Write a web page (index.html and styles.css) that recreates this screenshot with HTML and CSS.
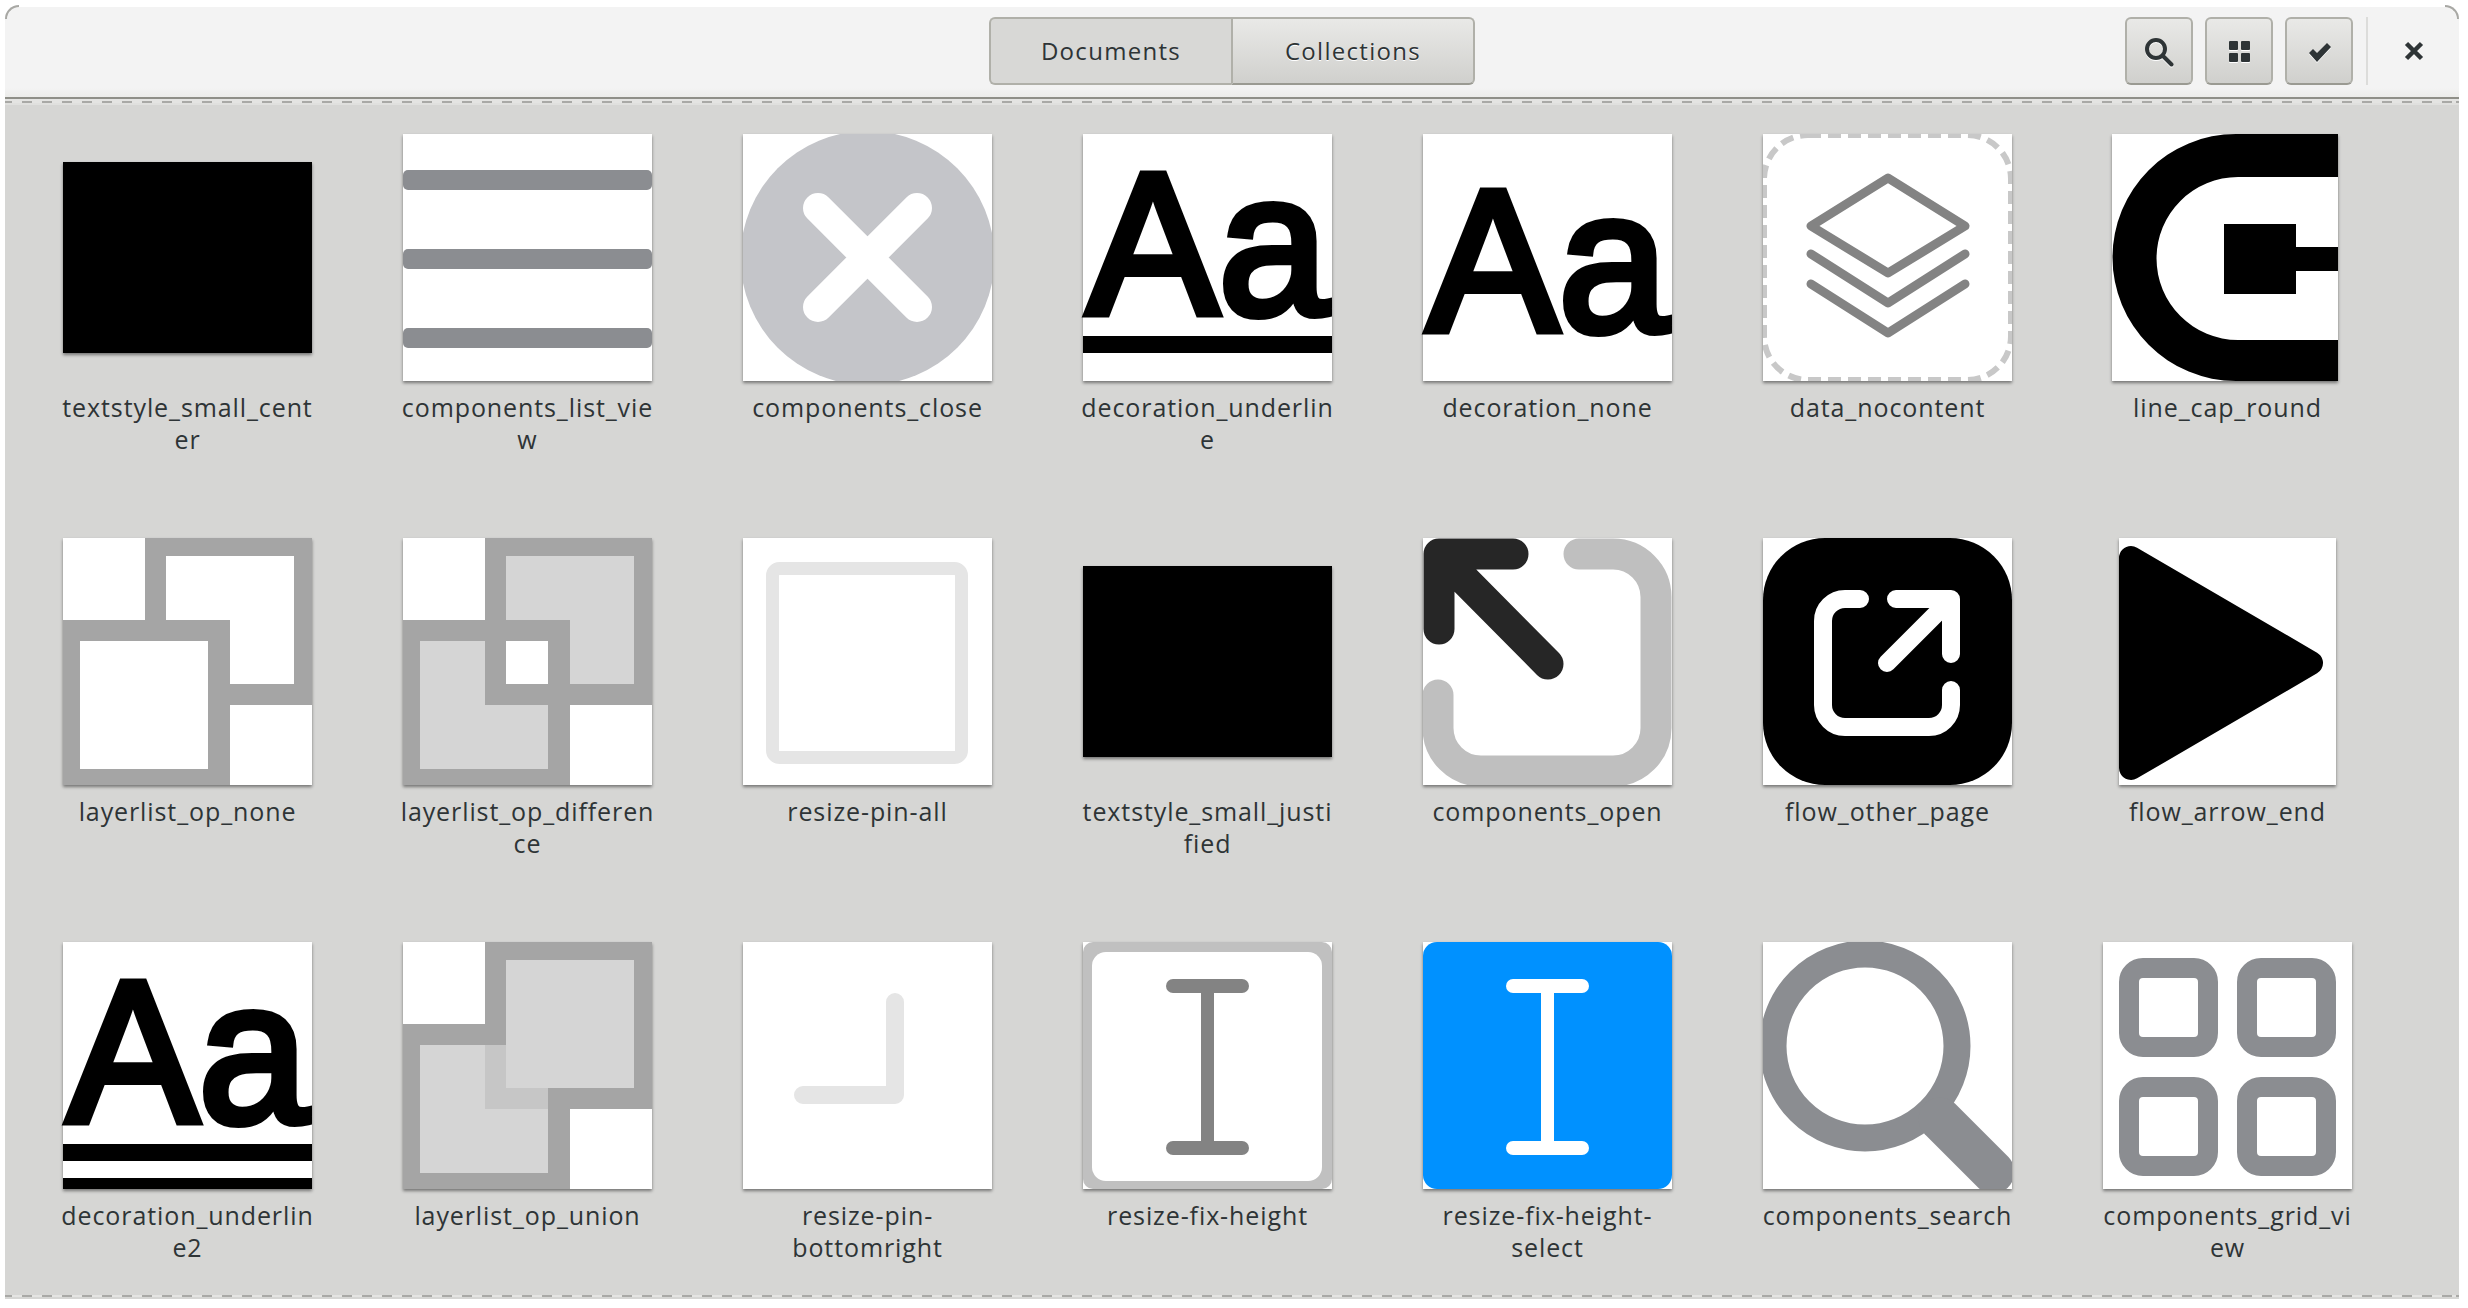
FILE: index.html
```html
<!DOCTYPE html>
<html lang="en">
<head>
    <meta charset="UTF-8">
    <title>Documents</title>
    <link rel="stylesheet" href="styles.css">
</head>
<body>
    <div class="window">
        <header class="titlebar">
            <div></div>
            <div class="switcher">
                <button class="seg active">Documents</button>
                <button class="seg">Collections</button>
            </div>
            <div class="actions">
                <button class="tool">
                    <svg width="32" height="32" viewBox="0 0 32 32" fill="none" stroke="#2e3436" stroke-width="4">
                        <circle cx="13" cy="14" r="9"/>
                        <path d="M20 21L28.500 29.500" stroke-linecap="round"/>
                    </svg>
                </button>
                <button class="tool">
                    <svg width="32" height="32" viewBox="0 0 32 32" fill="#2e3436">
                        <rect x="6" y="6" width="9" height="9" rx="1"/>
                        <rect x="18" y="6" width="9" height="9" rx="1"/>
                        <rect x="6" y="18" width="9" height="9" rx="1"/>
                        <rect x="18" y="18" width="9" height="9" rx="1"/>
                    </svg>
                </button>
                <button class="tool">
                    <svg width="32" height="32" viewBox="0 0 32 32" fill="#2e3436">
                        <path d="M6 18L10 14L14 18L24 8L28 12L14 27Z"/>
                    </svg>
                </button>
                <span class="sep"></span>
                <span class="close">
                    <svg width="32" height="32" viewBox="0 0 32 32" fill="none" stroke="#2e3436" stroke-width="4.500">
                        <path d="M8.500 8.500L23.500 23.500M23.500 8.500L8.500 23.500"/>
                    </svg>
                </span>
            </div>
        </header>
        <div class="dashes top"></div>

        <main class="grid">
            <!-- row 1 -->
            <div class="cell">
                <div class="frame"><div class="block"></div></div>
                <div class="name">textstyle_small_cent<wbr>er</div>
            </div>
            <div class="cell">
                <div class="frame">
                    <svg class="thumb" width="249" height="247" viewBox="0 0 249 247" fill="#8b8d91">
                        <rect y="36" width="249" height="20" rx="5"/>
                        <rect y="115" width="249" height="20" rx="5"/>
                        <rect y="194" width="249" height="20" rx="5"/>
                    </svg>
                </div>
                <div class="name">components_list_vie<wbr>w</div>
            </div>
            <div class="cell">
                <div class="frame">
                    <svg class="thumb" width="249" height="247" viewBox="0 0 249 247">
                        <circle cx="124.500" cy="124" r="127" fill="#c4c5c9"/>
                        <path d="M75 74L174 173M174 74L75 173" stroke="#fff" stroke-width="30" stroke-linecap="round"/>
                    </svg>
                </div>
                <div class="name">components_close</div>
            </div>
            <div class="cell">
                <div class="frame">
                    <svg class="thumb open" width="249" height="247" viewBox="0 0 249 247">
                        <text class="aa" x="4" y="180" textLength="241" lengthAdjust="spacingAndGlyphs">Aa</text>
                        <rect y="202" width="249" height="17"/>
                    </svg>
                </div>
                <div class="name">decoration_underlin<wbr>e</div>
            </div>
            <div class="cell">
                <div class="frame">
                    <svg class="thumb open" width="249" height="247" viewBox="0 0 249 247">
                        <text class="aa" x="4" y="197" textLength="241" lengthAdjust="spacingAndGlyphs">Aa</text>
                    </svg>
                </div>
                <div class="name">decoration_none</div>
            </div>
            <div class="cell">
                <div class="frame">
                    <svg class="thumb" width="249" height="247" viewBox="0 0 249 247" fill="none">
                        <rect x="1" y="1" width="247" height="245" rx="44" stroke="#c8c8c8" stroke-width="6" stroke-dasharray="13 7"/>
                        <g stroke="#838383" stroke-width="9" stroke-linecap="round" stroke-linejoin="round">
                            <path d="M125 44L202 92L125 139L48 92Z"/>
                            <path d="M48 120L125 169L202 120"/>
                            <path d="M48 150L125 199L202 150"/>
                        </g>
                    </svg>
                </div>
                <div class="name">data_nocontent</div>
            </div>
            <div class="cell">
                <div class="frame">
                    <svg class="thumb cap" width="226" height="247" viewBox="0 0 226 247">
                        <path d="M226 0H124A123.500 123.500 0 0 0 124 247H226V206H126A81.500 81.500 0 0 1 126 43H226Z"/>
                        <path d="M112 90H184V113H226V137H184V160H112Z"/>
                    </svg>
                </div>
                <div class="name">line_cap_round</div>
            </div>

            <!-- row 2 -->
            <div class="cell">
                <div class="frame">
                    <svg class="thumb" width="249" height="247" viewBox="0 0 249 247">
                        <path fill="#a5a5a5" d="M82 0H249V167H82Z"/>
                        <path fill="#fff" d="M103 18H231V146H103Z"/>
                        <path fill="#a5a5a5" d="M0 82H167V247H0Z"/>
                        <path fill="#fff" d="M17 103H145V231H17Z"/>
                    </svg>
                </div>
                <div class="name">layerlist_op_none</div>
            </div>
            <div class="cell">
                <div class="frame">
                    <svg class="thumb" width="249" height="247" viewBox="0 0 249 247">
                        <path fill="#a5a5a5" d="M82 0H249V167H82Z"/>
                        <path fill="#d5d5d5" d="M103 18H231V146H103Z"/>
                        <path fill="#a5a5a5" d="M0 82H167V247H0Z"/>
                        <path fill="#d5d5d5" d="M17 103H145V231H17Z"/>
                        <path fill="#a5a5a5" d="M82 103H145V167H82Z"/>
                        <path fill="#fff" d="M103 103H145V146H103Z"/>
                    </svg>
                </div>
                <div class="name">layerlist_op_differen<wbr>ce</div>
            </div>
            <div class="cell">
                <div class="frame">
                    <svg class="thumb" width="249" height="247" viewBox="0 0 249 247">
                        <rect x="29.500" y="30.500" width="189" height="189" rx="7" fill="none" stroke="#e5e5e5" stroke-width="13"/>
                    </svg>
                </div>
                <div class="name">resize-pin-all</div>
            </div>
            <div class="cell">
                <div class="frame"><div class="block"></div></div>
                <div class="name">textstyle_small_justi<wbr>fied</div>
            </div>
            <div class="cell">
                <div class="frame">
                    <svg class="thumb" width="249" height="247" viewBox="0 0 249 247" fill="none" stroke-width="31" stroke-linecap="round" stroke-linejoin="round">
                        <path stroke="#bfbfbf" d="M156 16H190A43 43 0 0 1 233 59V190A43 43 0 0 1 190 233H58A43 43 0 0 1 15 190V157"/>
                        <path stroke="#262626" d="M90 16H16V91M16 16L125 126"/>
                    </svg>
                </div>
                <div class="name">components_open</div>
            </div>
            <div class="cell">
                <div class="frame">
                    <svg class="thumb" width="249" height="247" viewBox="0 0 249 247">
                        <rect width="249" height="247" rx="62"/>
                        <path d="M97 61H82A22 22 0 0 0 60 83V167A22 22 0 0 0 82 189H166A22 22 0 0 0 188 167V152M133 61H188V116M188 61L124 125" fill="none" stroke="#fff" stroke-width="18" stroke-linecap="round" stroke-linejoin="round"/>
                    </svg>
                </div>
                <div class="name">flow_other_page</div>
            </div>
            <div class="cell">
                <div class="frame">
                    <svg class="thumb" width="217" height="247" viewBox="0 0 217 247">
                        <path d="M12 20L192 125L12 230Z" stroke="#000" stroke-width="24" stroke-linejoin="round"/>
                    </svg>
                </div>
                <div class="name">flow_arrow_end</div>
            </div>

            <!-- row 3 -->
            <div class="cell">
                <div class="frame">
                    <svg class="thumb open" width="249" height="247" viewBox="0 0 249 247">
                        <text class="aa" x="4" y="180" textLength="241" lengthAdjust="spacingAndGlyphs">Aa</text>
                        <rect y="202" width="249" height="17"/>
                        <rect y="236" width="249" height="11"/>
                    </svg>
                </div>
                <div class="name">decoration_underlin<wbr>e2</div>
            </div>
            <div class="cell">
                <div class="frame">
                    <svg class="thumb" width="249" height="247" viewBox="0 0 249 247">
                        <path fill="#a5a5a5" d="M82 0H249V167H167V247H0V82H82Z"/>
                        <path fill="#d5d5d5" d="M17 103H145V231H17Z"/>
                        <path fill="#c6c6c6" d="M82 103H145V167H82Z"/>
                        <path fill="#d5d5d5" d="M103 18H231V146H103Z"/>
                    </svg>
                </div>
                <div class="name">layerlist_op_union</div>
            </div>
            <div class="cell">
                <div class="frame">
                    <svg class="thumb" width="249" height="247" viewBox="0 0 249 247">
                        <path d="M152 60V153H60" fill="none" stroke="#e5e5e5" stroke-width="18" stroke-linecap="round" stroke-linejoin="round"/>
                    </svg>
                </div>
                <div class="name">resize-pin-bottomright</div>
            </div>
            <div class="cell">
                <div class="frame">
                    <svg class="thumb" width="249" height="247" viewBox="0 0 249 247" fill="#838383">
                        <rect width="249" height="247" rx="10" fill="#c0c0c0"/>
                        <rect x="9" y="10" width="230" height="229" rx="14" fill="#fff"/>
                        <rect x="83" y="37" width="83" height="14" rx="7"/>
                        <rect x="118" y="45" width="13" height="160"/>
                        <rect x="83" y="199" width="83" height="14" rx="7"/>
                    </svg>
                </div>
                <div class="name">resize-fix-height</div>
            </div>
            <div class="cell">
                <div class="frame">
                    <svg class="thumb" width="249" height="247" viewBox="0 0 249 247" fill="#fff">
                        <rect width="249" height="247" rx="14" fill="#0091ff"/>
                        <rect x="83" y="37" width="83" height="14" rx="7"/>
                        <rect x="118" y="45" width="13" height="160"/>
                        <rect x="83" y="199" width="83" height="14" rx="7"/>
                    </svg>
                </div>
                <div class="name">resize-fix-height-select</div>
            </div>
            <div class="cell">
                <div class="frame">
                    <svg class="thumb" width="249" height="247" viewBox="0 0 249 247" fill="none" stroke="#8b8d91">
                        <circle cx="102" cy="104" r="92" stroke-width="27"/>
                        <path d="M177 177L230 230" stroke-width="43" stroke-linecap="round"/>
                    </svg>
                </div>
                <div class="name">components_search</div>
            </div>
            <div class="cell">
                <div class="frame">
                    <svg class="thumb" width="249" height="247" viewBox="0 0 249 247" fill="none" stroke="#8b8d91" stroke-width="20">
                        <rect x="26" y="26" width="79" height="79" rx="14"/>
                        <rect x="144" y="26" width="79" height="79" rx="14"/>
                        <rect x="26" y="145" width="79" height="79" rx="14"/>
                        <rect x="144" y="145" width="79" height="79" rx="14"/>
                    </svg>
                </div>
                <div class="name">components_grid_vi<wbr>ew</div>
            </div>
        </main>
        <div class="dashes bottom"></div>
    </div>
</body>
</html>
```
FILE: styles.css
```css
html, body {
    margin: 0;
    padding: 0;
    background: #fff;
}
body {
    font-family: "Open Sans", "Noto Sans", sans-serif;
    color: #2e3436;
}
.window {
    position: relative;
    width: 2454px;
    height: 1292px;
    margin: 7px 0 0 5px;
    background: #d6d6d4;
    border-radius: 14px 14px 0 0;
}
.titlebar {
    position: relative;
    display: grid;
    grid-template-columns: 1fr auto 1fr;
    align-items: start;
    height: 90px;
    padding-top: 10px;
    box-sizing: border-box;
    background: linear-gradient(#f3f3f3 90%, #ececea);
    border-radius: 14px 14px 0 0;
}
.titlebar::before, .titlebar::after {
    content: "";
    position: absolute;
    top: -2px;
    width: 12px;
    height: 12px;
    border-top: 2px solid #a8a8a4;
}
.titlebar::before {
    left: 0;
    border-left: 2px solid #a8a8a4;
    border-radius: 14px 0 0 0;
}
.titlebar::after {
    right: 0;
    border-right: 2px solid #a8a8a4;
    border-radius: 0 14px 0 0;
}
.switcher {
    display: flex;
}
button {
    font-family: inherit;
    color: inherit;
    margin: 0;
    padding: 0;
    box-sizing: border-box;
    border: 2px solid #b0b0a9;
    border-bottom-color: #9a9a92;
    background: linear-gradient(#e9e9e7, #d0d0cd);
}
.seg {
    width: 244px;
    height: 68px;
    padding-bottom: 2px;
    font-size: 24px;
    letter-spacing: 1.300px;
}
.seg:first-child {
    width: 242px;
    border-radius: 6px 0 0 6px;
    border-right: none;
}
.seg:last-child {
    border-radius: 0 6px 6px 0;
    text-shadow: 0 1px 0 #fff;
}
.seg.active {
    background: #d8d8d6;
    border-bottom-color: #b0b0a9;
}
.actions {
    display: flex;
    justify-content: flex-end;
    align-items: stretch;
    gap: 12px;
}
.tool {
    display: flex;
    align-items: center;
    justify-content: center;
    width: 68px;
    height: 68px;
    border-radius: 6px;
}
.tool svg {
    filter: drop-shadow(0 1px 0 #fff);
}
.sep {
    width: 2px;
    margin-left: 1px;
    background: #dcdcda;
}
.close {
    display: flex;
    align-items: center;
    justify-content: center;
    width: 91px;
    margin-left: -12px;
}
.dashes {
    height: 2px;
    background-color: #e4e4e2;
    background-image: repeating-linear-gradient(90deg, #a9a9a6 0, #a9a9a6 10px, transparent 10px, transparent 20px);
    background-position: -3px 0;
}
.dashes.top {
    margin-top: 4px;
    box-shadow: 0 -2px 0 #e4e4e2, 0 -4px 0 #8f8f88, 0 2px 0 #e0e0de;
}
.dashes.bottom {
    position: absolute;
    left: 0;
    right: 0;
    bottom: 2px;
}
.grid {
    display: grid;
    grid-template-columns: repeat(7, 249px);
    grid-auto-rows: 404px;
    column-gap: 91px;
    padding: 31px 0 0 58px;
}
.cell {
    display: flex;
    flex-direction: column;
    align-items: center;
}
.frame {
    display: flex;
    align-items: center;
    justify-content: center;
    width: 249px;
    height: 247px;
}
.thumb, .block {
    display: block;
    background: #fff;
    box-shadow: 0 2px 3px rgba(0, 0, 0, 0.45);
}
.thumb.cap {
    margin-right: 5px;
}
.thumb.open {
    overflow: visible;
}
.block {
    width: 249px;
    height: 191px;
    background: #000;
}
.aa {
    font-family: "Liberation Sans", Arial, sans-serif;
    font-size: 203px;
    stroke: #000;
    stroke-width: 8px;
}
.name {
    width: 262px;
    margin-top: 10px;
    font-size: 25px;
    line-height: 32px;
    letter-spacing: 0.900px;
    text-align: center;
    overflow-wrap: anywhere;
}
```
